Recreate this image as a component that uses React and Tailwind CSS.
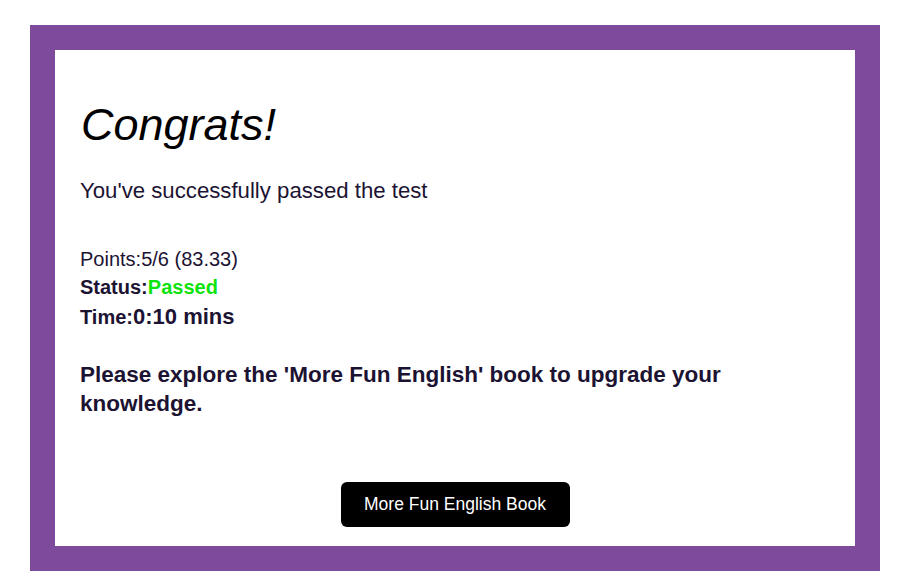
export default function App() {
  return (
    <div className="min-h-[588px] bg-white pt-[25px] pl-[30px]" style={{ fontFamily: '"Liberation Sans", Arial, sans-serif' }}>
      <div className="w-[850px] border-[25px] border-[#7d4a9c] bg-white">
        <div className="pt-[52px] px-[25px] pb-[19px] text-[#1c1333]">
          <h1 className="ml-[1px] text-[45px] leading-[45px] italic font-normal text-black">Congrats!</h1>
          <p className="mt-[33px] text-[22.2px] leading-[22px]">You've successfully passed the test</p>
          <div className="mt-[43px] text-[20px] leading-[28px]">
            <div>Points:5/6 (83.33)</div>
            <div className="font-bold">
              Status:<span className="text-[#0de30d]">Passed</span>
            </div>
            <div className="font-bold pt-[2px]">
              Time:<span className="text-[22px]">0:10 mins</span>
            </div>
          </div>
          <p className="mt-[30px] text-[22.5px] leading-[28.5px] font-bold">
            Please explore the 'More Fun English' book to upgrade your knowledge.
          </p>
          <div className="mt-[64px] flex justify-center">
            <button className="w-[229px] h-[45px] rounded-[6px] bg-black text-white text-[17.5px]">
              More Fun English Book
            </button>
          </div>
        </div>
      </div>
    </div>
  );
}
